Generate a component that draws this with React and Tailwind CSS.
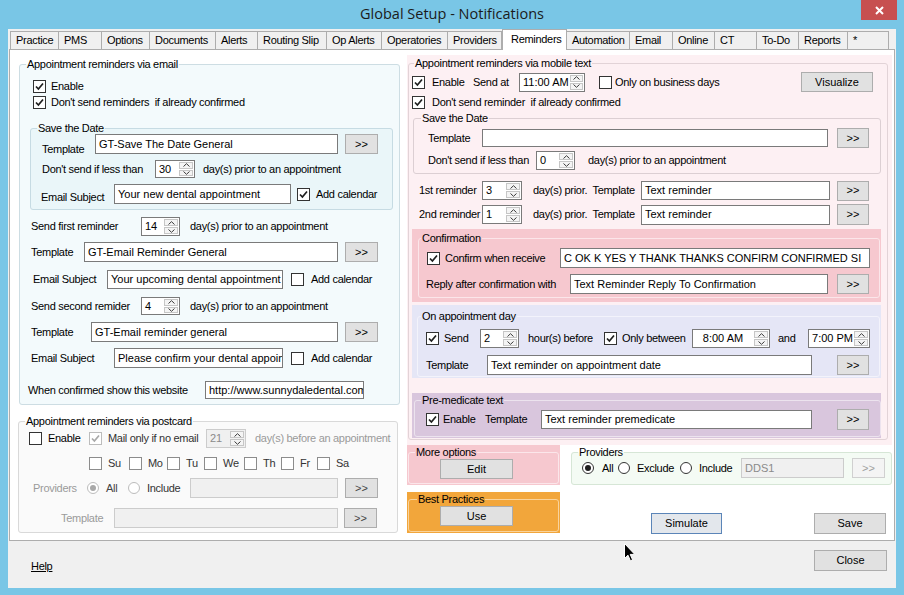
import React from 'react';

function Check({ on, off, dim }) {
  const border = off ? 'border-[#bcbcbc]' : dim ? 'border-[#8c8c8c]' : 'border-[#333333]';
  return (
    <span className={`flex h-[13px] w-[13px] shrink-0 items-center justify-center border bg-white ${border}`}>
      {on && (
        <svg width="9" height="9" viewBox="0 0 9 9">
          <path d="M1 4.5 L3.4 7 L8 1.5" fill="none" stroke={off ? '#a8a8a8' : '#1e1e1e'} strokeWidth="1.7" />
        </svg>
      )}
    </span>
  );
}

function Radio({ on, off }) {
  return (
    <span className={`flex h-[12px] w-[12px] shrink-0 items-center justify-center rounded-full border bg-white ${off ? 'border-[#bcbcbc]' : 'border-[#333333]'}`}>
      {on && <span className={`h-[6px] w-[6px] rounded-full ${off ? 'bg-[#a8a8a8]' : 'bg-[#1e1e1e]'}`} />}
    </span>
  );
}

function L({ c = '', children }) {
  return <span className={`shrink-0 whitespace-pre ${c}`}>{children}</span>;
}

function Field({ c = '', v, off }) {
  return (
    <div className={`flex shrink-0 items-center overflow-hidden whitespace-nowrap border pl-[3px] tracking-normal ${off ? 'border-[#cccccc] bg-[#f0f0f0] text-[#8a8a8a]' : 'border-[#7a7a7a] bg-white text-black'} ${c}`}>
      {v}
    </div>
  );
}

function Btn({ c = '', label = '>>', off, focus }) {
  let look = 'border-[#adadad] bg-[#e1e1e1]';
  if (off) look = 'border-[#d0d0d0] bg-[#f4f4f4] text-[#a0a0a0]';
  if (focus) look = 'border-[#5b85b8] bg-[#e3e7ec]';
  return (
    <div className={`flex shrink-0 items-center justify-center border tracking-normal ${look} ${c}`}>{label}</div>
  );
}

function Arrow({ up }) {
  return (
    <div className="flex flex-1 items-center justify-center border border-[#c6c6c6] bg-[#f4f4f4]">
      <svg width="7" height="4" viewBox="0 0 7 4">
        <path d={up ? 'M0.5 3.5 L3.5 0.7 L6.5 3.5' : 'M0.5 0.5 L3.5 3.3 L6.5 0.5'} fill="none" stroke="#3a3a3a" strokeWidth="1" />
      </svg>
    </div>
  );
}

function Spin({ c = '', v, off, align = 'pl-[3px]' }) {
  return (
    <div className={`flex shrink-0 border tracking-normal ${off ? 'border-[#cccccc] bg-[#f0f0f0] text-[#8a8a8a]' : 'border-[#7a7a7a] bg-white'} ${c}`}>
      <div className={`flex flex-1 items-center whitespace-nowrap ${align}`}>{v}</div>
      <div className="flex w-[16px] flex-col gap-px p-px">
        <Arrow up />
        <Arrow />
      </div>
    </div>
  );
}

function Group({ title, c = '', lg = 'ml-[6px]', children }) {
  return (
    <fieldset className={`rounded-[3px] border ${c}`}>
      <legend className={`px-px leading-[12px] ${lg}`}>{title}</legend>
      {children}
    </fieldset>
  );
}

const tabs = [
  ['Practice', 'w-[49px] border-l'],
  ['PMS', 'w-[43px]'],
  ['Options', 'w-[48px]'],
  ['Documents', 'w-[66px]'],
  ['Alerts', 'w-[42px]'],
  ['Routing Slip', 'w-[69px]'],
  ['Op Alerts', 'w-[55px]'],
  ['Operatories', 'w-[66px]'],
  ['Providers', 'w-[54px]'],
  ['Reminders', 'w-[65px]'],
  ['Automation', 'w-[63px]'],
  ['Email', 'w-[43px]'],
  ['Online', 'w-[42px]'],
  ['CT', 'w-[42px]'],
  ['To-Do', 'w-[42px]'],
  ['Reports', 'w-[49px]'],
  ['*', 'w-[41px]'],
];

const days = [
  ['Su', 'w-[40px]'],
  ['Mo', 'w-[38px]'],
  ['Tu', 'w-[37px]'],
  ['We', 'w-[40px]'],
  ['Th', 'w-[37px]'],
  ['Fr', 'w-[36px]'],
  ['Sa', 'w-[36px]'],
];

function EmailGroup() {
  return (
    <Group title="Appointment reminders via email" c="mt-[3px] ml-[7px] w-[381px] border-[#cddde3] bg-[#f3fafc] pb-[5px]">
      <div className="mt-[9px] flex h-[14px] items-center">
        <span className="ml-[13px]"><Check on /></span>
        <L c="ml-[5px]">Enable</L>
      </div>
      <div className="mt-[2px] flex h-[14px] items-center">
        <span className="ml-[13px]"><Check on /></span>
        <L c="ml-[5px]">Don't send reminders  if already confirmed</L>
      </div>

      <Group title="Save the Date" c="mt-[13px] ml-[10px] w-[363px] border-[#c6dbe3] bg-[#eaf6f9] pb-[5px]">
        <div className="flex h-[20px] items-center">
          <L c="ml-[11px] mt-[10px] w-[53px]">Template</L>
          <Field c="h-[20px] w-[243px]" v="GT-Save The Date General" />
          <Btn c="ml-[7px] h-[20px] w-[33px]" />
        </div>
        <div className="mt-[6px] flex h-[18px] items-center">
          <L c="ml-[11px] w-[113px]">Don't send if less than</L>
          <Spin c="h-[18px] w-[40px]" v="30" />
          <L c="ml-[8px]">day(s) prior to an appointment</L>
        </div>
        <div className="mt-[6px] flex h-[20px] items-center">
          <L c="ml-[10px] mt-[6px] w-[73px]">Email Subject</L>
          <Field c="h-[20px] w-[177px]" v="Your new dental appointment" />
          <span className="ml-[6px]"><Check on /></span>
          <L c="ml-[6px]">Add calendar</L>
        </div>
      </Group>

      <div className="mt-[7px] flex h-[19px] items-center">
        <L c="ml-[11px] w-[110px]">Send first reminder</L>
        <Spin c="h-[19px] w-[39px]" v="14" />
        <L c="ml-[10px]">day(s) prior to an appointment</L>
      </div>
      <div className="mt-[6px] flex h-[20px] items-center">
        <L c="ml-[11px] w-[53px]">Template</L>
        <Field c="h-[20px] w-[254px]" v="GT-Email Reminder General" />
        <Btn c="ml-[7px] h-[20px] w-[33px]" />
      </div>
      <div className="mt-[8px] flex h-[19px] items-center">
        <L c="ml-[13px] w-[74px]">Email Subject</L>
        <Field c="h-[19px] w-[176px]" v="Your upcoming dental appointment" />
        <span className="ml-[8px]"><Check /></span>
        <L c="ml-[7px]">Add calendar</L>
      </div>
      <div className="mt-[8px] flex h-[18px] items-center">
        <L c="ml-[11px] w-[110px]">Send second remider</L>
        <Spin c="h-[18px] w-[39px]" v="4" />
        <L c="ml-[10px]">day(s) prior to an appointment</L>
      </div>
      <div className="mt-[7px] flex h-[20px] items-center">
        <L c="ml-[11px] w-[60px]">Template</L>
        <Field c="h-[20px] w-[247px]" v="GT-Email reminder general" />
        <Btn c="ml-[7px] h-[20px] w-[33px]" />
      </div>
      <div className="mt-[6px] flex h-[20px] items-center">
        <L c="ml-[11px] w-[83px]">Email Subject</L>
        <Field c="h-[20px] w-[169px]" v="Please confirm your dental appointment" />
        <span className="ml-[8px]"><Check /></span>
        <L c="ml-[7px]">Add calendar</L>
      </div>
      <div className="mt-[13px] flex h-[18px] items-center">
        <L c="ml-[8px] w-[177px]">When confirmed show this website</L>
        <Field c="h-[18px] w-[159px]" v="http://www.sunnydaledental.com" />
      </div>
    </Group>
  );
}

function PostcardGroup() {
  return (
    <Group title="Appointment reminders via postcard" c="mt-[10px] ml-[6px] w-[380px] border-[#d9d9d9] bg-[#fafafa] pb-[4px]">
      <div className="mt-[2px] flex h-[19px] items-center">
        <span className="ml-[10px]"><Check /></span>
        <L c="ml-[6px] w-[41px]">Enable</L>
        <Check on off />
        <L c="ml-[6px] w-[98px] text-[#333333]">Mail only if no email</L>
        <Spin c="h-[19px] w-[40px]" v="21" off />
        <L c="ml-[9px] text-[#9a9a9a]">day(s) before an appointment</L>
      </div>
      <div className="mt-[8px] flex h-[14px] items-center pl-[70px]">
        {days.map(([d, w]) => (
          <div key={d} className={`flex shrink-0 items-center ${w}`}>
            <Check dim />
            <L c="ml-[6px] text-[#333333]">{d}</L>
          </div>
        ))}
      </div>
      <div className="mt-[8px] flex h-[20px] items-center">
        <L c="ml-[14px] w-[54px] text-[#9a9a9a]">Providers</L>
        <Radio on off />
        <L c="ml-[7px] w-[22px] text-[#444444]">All</L>
        <Radio off />
        <L c="ml-[7px] w-[43px] text-[#333333]">Include</L>
        <Field c="h-[20px] w-[148px]" off v="" />
        <Btn c="ml-[7px] h-[20px] w-[33px] text-[#444444]" />
      </div>
      <div className="mt-[10px] flex h-[20px] items-center">
        <L c="ml-[42px] w-[53px] text-[#9a9a9a]">Template</L>
        <Field c="h-[20px] w-[224px]" off v="" />
        <Btn c="ml-[6px] h-[20px] w-[33px] text-[#444444]" />
      </div>
    </Group>
  );
}

function MobileGroup() {
  return (
    <div className="flex flex-col bg-[#fdf0f3] pl-[1px] pt-[2px] pb-[5px]">
      <Group title="Appointment reminders via mobile text" c="w-[480px] border-[#e2d3d7] pb-[1px]" lg="ml-[5px]">
        <div className="mt-[3px] flex h-[20px] items-center">
          <span className="ml-[3px]"><Check on /></span>
          <L c="ml-[7px] w-[41px]">Enable</L>
          <L c="w-[46px]">Send at</L>
          <Spin c="h-[19px] w-[66px]" v="11:00 AM" />
          <span className="ml-[14px]"><Check /></span>
          <L c="ml-[3px]">Only on business days</L>
          <Btn c="ml-auto mr-[14px] h-[20px] w-[72px]" label="Visualize" />
        </div>
        <div className="mt-[3px] flex h-[14px] items-center">
          <span className="ml-[3px]"><Check on /></span>
          <L c="ml-[7px]">Don't send reminder  if already confirmed</L>
        </div>

        <Group title="Save the Date" c="mt-[3px] ml-[4px] w-[468px] border-[#dccfd3] pb-[3px]" lg="ml-[7px]">
          <div className="mt-[4px] flex h-[20px] items-center">
            <L c="ml-[14px] w-[54px]">Template</L>
            <Field c="h-[18px] w-[346px]" v="" />
            <Btn c="ml-[9px] h-[20px] w-[32px]" />
          </div>
          <div className="mt-[3px] flex h-[19px] items-center">
            <L c="ml-[14px] w-[108px]">Don't send if less than</L>
            <Spin c="h-[19px] w-[39px]" v="0" />
            <L c="ml-[13px]">day(s) prior to an appointment</L>
          </div>
        </Group>

        <div className="mt-[6px] flex h-[21px] items-center">
          <L c="ml-[10px] w-[63px]">1st reminder</L>
          <Spin c="h-[19px] w-[40px]" v="3" />
          <L c="ml-[11px] w-[108px]">day(s) prior.  Template</L>
          <Field c="h-[19px] w-[189px]" v="Text reminder" />
          <Btn c="ml-[7px] h-[20px] w-[32px]" />
        </div>
        <div className="mt-[3px] flex h-[21px] items-center">
          <L c="ml-[10px] w-[63px]">2nd reminder</L>
          <Spin c="h-[19px] w-[40px]" v="1" />
          <L c="ml-[11px] w-[108px]">day(s) prior.  Template</L>
          <Field c="h-[20px] w-[189px]" v="Text reminder" />
          <Btn c="ml-[7px] h-[21px] w-[32px]" />
        </div>

        <div className="mt-[4px] ml-[3px] w-[469px] bg-[#f6c8cf] pt-[3px] pl-[6px] pb-[4px]">
          <Group title="Confirmation" c="w-[462px] border-[#fbe6ea] pb-[3px]" lg="ml-[2px]">
            <div className="mt-[4px] flex h-[20px] items-center">
              <span className="ml-[8px]"><Check on /></span>
              <L c="ml-[5px] w-[115px]">Confirm when receive</L>
              <Field c="h-[20px] w-[310px]" v="C OK K YES Y THANK THANKS CONFIRM CONFIRMED SI" />
            </div>
            <div className="mt-[6px] flex h-[20px] items-center">
              <L c="ml-[7px] w-[144px]">Reply after confirmation with</L>
              <Field c="h-[20px] w-[258px]" v="Text Reminder Reply To Confirmation" />
              <Btn c="ml-[9px] h-[20px] w-[32px]" />
            </div>
          </Group>
        </div>

        <div className="mt-[3px] ml-[3px] w-[469px] bg-[#e5e6f6] pt-[5px] pl-[5px] pb-[1px]">
          <Group title="On appointment day" c="w-[463px] border-[#f3f3fb] pb-[1px]" lg="ml-[3px]">
            <div className="mt-[7px] flex h-[19px] items-center">
              <span className="ml-[8px]"><Check on /></span>
              <L c="ml-[5px] w-[36px]">Send</L>
              <Spin c="h-[19px] w-[39px]" v="2" />
              <L c="ml-[9px] w-[76px]">hour(s) before</L>
              <Check on />
              <L c="ml-[5px] w-[70px]">Only between</L>
              <Spin c="h-[19px] w-[78px]" v="8:00 AM" align="justify-center" />
              <L c="ml-[8px] w-[30px]">and</L>
              <Spin c="h-[19px] w-[62px]" v="7:00 PM" align="justify-end" />
            </div>
            <div className="mt-[7px] flex h-[20px] items-center">
              <L c="ml-[8px] w-[61px]">Template</L>
              <Field c="h-[20px] w-[325px]" v="Text reminder on appointment date" />
              <Btn c="ml-[25px] h-[20px] w-[32px]" />
            </div>
          </Group>
        </div>

        <div className="mt-[15px] ml-[3px] w-[469px] bg-[#d9c6dd] pt-[1px] pl-[2px] pb-[1px]">
          <Group title="Pre-medicate text" c="w-[467px] border-[#ece3ee] pb-[6px]">
            <div className="mt-[3px] flex h-[21px] items-center">
              <span className="ml-[11px]"><Check on /></span>
              <L c="ml-[4px] w-[42px]">Enable</L>
              <L c="w-[56px]">Template</L>
              <Field c="h-[19px] w-[271px]" v="Text reminder premedicate" />
              <Btn c="ml-[25px] h-[21px] w-[32px]" />
            </div>
          </Group>
        </div>
      </Group>
    </div>
  );
}

function BottomRight() {
  return (
    <div className="flex">
      <div className="flex w-[153px] shrink-0 flex-col">
        <div className="bg-[#f6c8cf] px-px pt-px pb-px">
          <Group title="More options" c="w-[151px] border-[#fbe6ea] pb-[4px]">
            <Btn c="mt-px ml-[31px] h-[20px] w-[73px]" label="Edit" />
          </Group>
        </div>
        <div className="mt-[7px] bg-[#f2a63b] px-px pt-px pb-px">
          <Group title="Best Practices" c="w-[151px] border-[#f9d39c] pb-[5px]" lg="ml-[8px]">
            <Btn c="mt-px ml-[31px] h-[20px] w-[73px]" label="Use" />
          </Group>
        </div>
      </div>
      <div className="flex flex-1 flex-col">
        <Group title="Providers" c="mt-px ml-[11px] w-[321px] border-[#d6e6d6] bg-[#f4fbf4] pb-[6px]">
          <div className="flex h-[20px] items-center">
            <span className="ml-[10px]"><Radio on /></span>
            <L c="ml-[8px] w-[16px]">All</L>
            <Radio />
            <L c="ml-[7px] w-[43px]">Exclude</L>
            <Radio />
            <L c="ml-[7px] w-[42px]">Include</L>
            <Field c="h-[20px] w-[103px]" v="DDS1" off />
            <Btn c="ml-[8px] h-[20px] w-[33px]" off />
          </div>
        </Group>
        <div className="mt-[28px] flex h-[21px] items-center">
          <Btn c="ml-[91px] h-[21px] w-[71px]" label="Simulate" focus />
          <Btn c="ml-auto mr-[6px] h-[21px] w-[72px]" label="Save" />
        </div>
      </div>
    </div>
  );
}

export default function App() {
  return (
    <div className="relative flex h-[595px] w-[904px] flex-col overflow-hidden bg-[#79c6e6] font-['Liberation_Sans',Arial,sans-serif] text-[11px] leading-[13px] tracking-[-0.3px] text-black">
      <div className="grid h-[29px] shrink-0 grid-cols-[1fr_auto_1fr] items-start">
        <div />
        <div className="pt-[4px] font-['Open_Sans',sans-serif] text-[14.5px] leading-[20px] tracking-normal text-[#1b1b1b]">
          Global Setup - Notifications
        </div>
        <div className="flex justify-end pr-[7px]">
          <div className="flex h-[20px] w-[36px] items-center justify-center bg-[#c75050]">
            <svg width="9" height="9" viewBox="0 0 9 9">
              <path d="M1 1 L8 8 M8 1 L1 8" stroke="white" strokeWidth="2" />
            </svg>
          </div>
        </div>
      </div>

      <div className="mx-[8px] flex h-[559px] flex-col bg-[#f0f0f0]">
        <div className="flex h-[20px] shrink-0 items-end pl-[2px]">
          {tabs.map(([t, w]) =>
            t === 'Reminders' ? (
              <div key={t} className={`relative z-10 -mb-px flex h-[21px] shrink-0 items-start border border-b-0 border-[#adadad] bg-white pl-[8px] pt-[3px] ${w}`}>
                {t}
              </div>
            ) : (
              <div key={t} className={`flex h-[18px] shrink-0 items-center border-t border-r border-[#adadad] bg-[#f0f0f0] pl-[5px] ${w}`}>
                {t}
              </div>
            )
          )}
        </div>

        <div className="ml-px flex h-[492px] w-[886px] shrink-0 border border-[#adadad] bg-white pl-[2px] pt-[5px]">
          <div className="flex w-[391px] shrink-0 flex-col">
            <EmailGroup />
            <PostcardGroup />
          </div>
          <div className="ml-[4px] flex w-[485px] shrink-0 flex-col">
            <MobileGroup />
            <BottomRight />
          </div>
        </div>

        <div className="flex h-[47px] shrink-0 items-start justify-between">
          <span className="ml-[23px] mt-[19px] underline">Help</span>
          <Btn c="mt-[9px] mr-[9px] h-[21px] w-[73px]" label="Close" />
        </div>
      </div>

      <svg className="absolute left-[624px] top-[543px]" width="12" height="19" viewBox="0 0 12 19">
        <path d="M0.5 0.5 L0.5 15.5 L4 12.2 L6.4 17.8 L8.6 16.8 L6.2 11.4 L10.8 11.4 Z" fill="black" stroke="white" strokeWidth="1" />
      </svg>
    </div>
  );
}
